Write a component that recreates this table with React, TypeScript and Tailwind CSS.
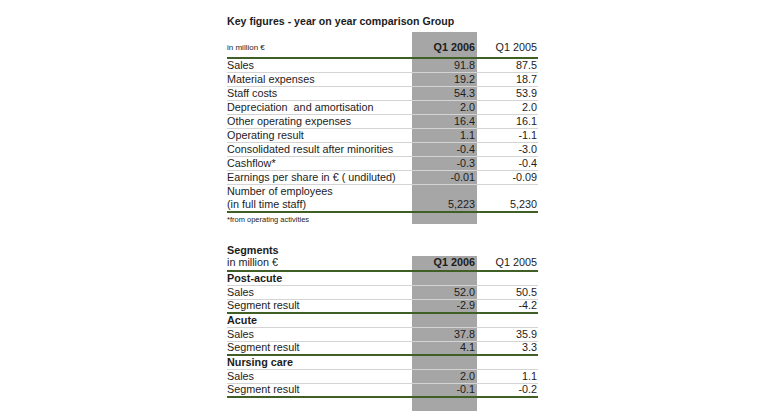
import React from 'react';

type Row = { label: string; a: string; b: string; bold?: boolean; green?: boolean };

const keyRows: Row[] = [
  { label: 'Sales', a: '91.8', b: '87.5' },
  { label: 'Material expenses', a: '19.2', b: '18.7' },
  { label: 'Staff costs', a: '54.3', b: '53.9' },
  { label: 'Depreciation  and amortisation', a: '2.0', b: '2.0' },
  { label: 'Other operating expenses', a: '16.4', b: '16.1' },
  { label: 'Operating result', a: '1.1', b: '-1.1' },
  { label: 'Consolidated result after minorities', a: '-0.4', b: '-3.0' },
  { label: 'Cashflow*', a: '-0.3', b: '-0.4' },
  { label: 'Earnings per share in € ( undiluted)', a: '-0.01', b: '-0.09' },
];

const segmentRows: Row[] = [
  { label: 'Post-acute', a: '', b: '', bold: true },
  { label: 'Sales', a: '52.0', b: '50.5' },
  { label: 'Segment result', a: '-2.9', b: '-4.2', green: true },
  { label: 'Acute', a: '', b: '', bold: true },
  { label: 'Sales', a: '37.8', b: '35.9' },
  { label: 'Segment result', a: '4.1', b: '3.3', green: true },
  { label: 'Nursing care', a: '', b: '', bold: true },
  { label: 'Sales', a: '2.0', b: '1.1' },
  { label: 'Segment result', a: '-0.1', b: '-0.2', green: true },
];

function DataRow({ row }: { row: Row }) {
  return (
    <div
      className={`flex h-[14px] items-end ${
        row.green ? 'border-b-2 border-[#3f5f24]' : 'border-b border-[#d4d4d4]'
      }`}
    >
      <div className={`w-[185px] whitespace-pre ${row.bold ? 'font-bold' : ''}`}>{row.label}</div>
      <div className="w-[65px] h-full bg-[#a6a6a6] text-right pr-[2px] flex items-end justify-end">{row.a}</div>
      <div className="w-[61px] text-right pr-[1px]">{row.b}</div>
    </div>
  );
}

export default function App() {
  return (
    <div
      className="w-[767px] h-[415px] bg-white text-[#1c1c1c] text-[10.8px] leading-[13px] pl-[227px] pt-[15px]"
      style={{ fontFamily: '"Liberation Sans", Arial, sans-serif' }}
    >
      {/* Key figures */}
      <div className="font-bold text-[10.6px] h-[13px]">Key figures - year on year comparison Group</div>
      <div className="h-[4px]" />
      <div className="w-[311px]">
        <div className="flex h-[27px] items-end border-b-2 border-[#3f5f24]">
          <div className="w-[185px] text-[8px] leading-[10px] pb-[4px]">in million €</div>
          <div className="w-[65px] h-full bg-[#a6a6a6] flex items-end justify-end pr-[2px] pb-[3px] font-bold">
            Q1 2006
          </div>
          <div className="w-[61px] text-right pr-[1px] pb-[3px]">Q1 2005</div>
        </div>
        {keyRows.map((r) => (
          <DataRow key={r.label} row={r} />
        ))}
        <div className="flex h-[28px] items-end border-b-2 border-[#3f5f24]">
          <div className="w-[185px]">
            Number of employees
            <br />
            (in full time staff)
          </div>
          <div className="w-[65px] h-full bg-[#a6a6a6] flex items-end justify-end pr-[2px]">5,223</div>
          <div className="w-[61px] text-right pr-[1px]">5,230</div>
        </div>
        <div className="flex h-[11px]">
          <div className="w-[185px] text-[7.5px] leading-[9px] pt-[2px]">*from operating activities</div>
          <div className="w-[65px] bg-[#a6a6a6]" />
        </div>
      </div>

      {/* Segments */}
      <div className="h-[20px]" />
      <div className="font-bold h-[12px]">Segments</div>
      <div className="w-[311px]">
        <div className="flex h-[16px] items-end border-b-2 border-[#3f5f24]">
          <div className="w-[185px] pb-[1px]">in million €</div>
          <div className="w-[65px] h-full bg-[#a6a6a6] flex items-end justify-end pr-[2px] pb-[1px] font-bold">
            Q1 2006
          </div>
          <div className="w-[61px] text-right pr-[1px] pb-[1px]">Q1 2005</div>
        </div>
        {segmentRows.map((r, i) => (
          <DataRow key={i} row={r} />
        ))}
        <div className="flex h-[13px]">
          <div className="w-[185px]" />
          <div className="w-[65px] bg-[#a6a6a6]" />
        </div>
      </div>
    </div>
  );
}
